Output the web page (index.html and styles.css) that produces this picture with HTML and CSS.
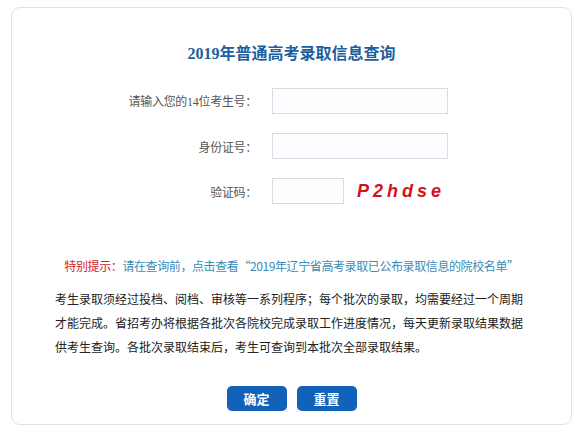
FILE: index.html
```html
<!DOCTYPE html>
<html>
<head>
    <meta charset="utf-8">
    <title>2019年普通高考录取信息查询</title>
    <link rel="stylesheet" href="styles.css">
</head>
<body>
    <div class="query-box">
        <h1 class="query-title"><span class="num">2019</span>年普通高考录取信息查询</h1>

        <form class="query-form" onsubmit="return false">
            <div class="form-row">
                <label class="form-label" for="examNo">请输入您的<span class="num">14</span>位考生号：</label>
                <input class="form-input" type="text" id="examNo">
            </div>
            <div class="form-row">
                <label class="form-label" for="idCard">身份证号：</label>
                <input class="form-input" type="text" id="idCard">
            </div>
            <div class="form-row">
                <label class="form-label" for="code">验证码：</label>
                <input class="form-input short" type="text" id="code">
                <span class="captcha">P2hdse</span>
            </div>

            <p class="notice"><span class="notice-tag">特别提示：</span>请在查询前，点击查看“2019年辽宁省高考录取已公布录取信息的院校名单”</p>

            <p class="desc">考生录取须经过投档、阅档、审核等一系列程序；每个批次的录取，均需要经过一个周期才能完成。省招考办将根据各批次各院校完成录取工作进度情况，每天更新录取结果数据供考生查询。各批次录取结束后，考生可查询到本批次全部录取结果。</p>

            <div class="button-row">
                <button class="btn" type="submit">确定</button>
                <button class="btn" type="reset">重置</button>
            </div>
        </form>
    </div>
</body>
</html>
```

FILE: styles.css
```css
body {
    margin: 0;
    background-color: #fff;
    font-family: "Noto Sans CJK SC", "Liberation Sans", sans-serif;
    color: #222;
}
.query-box {
    margin: 7px 5px 0 11px;
    height: 418px;
    border: 1px solid #e2e2e6;
    border-radius: 9px;
    background-color: #fff;
    padding-top: 34px;
    box-sizing: border-box;
}
.query-title {
    margin: 0;
    font-size: 16px;
    line-height: 20px;
    font-weight: bold;
    color: #1d5f9e;
    text-align: center;
}
.num {
    font-family: "Liberation Serif", serif;
}
.query-form {
    margin: 0;
}
.form-row {
    display: flex;
    align-items: center;
    margin-top: 19px;
}
.form-row:first-child {
    margin-top: 24px;
}
.form-label {
    width: 245px;
    padding-right: 15px;
    text-align: right;
    font-size: 12px;
    letter-spacing: -0.3px;
    color: #555;
}
.form-input {
    width: 176px;
    height: 26px;
    box-sizing: border-box;
    border: 1px solid #dcdce0;
    background-color: #fdfcfe;
    margin: 0;
    padding: 0 4px;
    outline: none;
}
.form-input.short {
    width: 72px;
}
.captcha {
    margin-left: 13px;
    font-family: "Liberation Sans", Arial, sans-serif;
    font-size: 18px;
    font-weight: bold;
    font-style: italic;
    letter-spacing: 4px;
    color: #d3121b;
}
.notice {
    margin: 52px 0 0;
    font-size: 12px;
    line-height: 20px;
    letter-spacing: -0.4px;
    color: #3a8cb6;
    text-align: center;
}
.notice-tag {
    color: #d2232a;
}
.desc {
    width: 470px;
    margin: 11px 0 0 43px;
    font-size: 12px;
    line-height: 24px;
    color: #222;
}
.button-row {
    display: flex;
    justify-content: center;
    gap: 10px;
    margin-top: 27px;
}
.btn {
    width: 60px;
    height: 25px;
    padding: 0;
    border: none;
    border-radius: 5px;
    background-color: #1262b9;
    color: #fff;
    font-family: "Noto Sans CJK SC", sans-serif;
    font-size: 13px;
    font-weight: bold;
    cursor: pointer;
}
```
